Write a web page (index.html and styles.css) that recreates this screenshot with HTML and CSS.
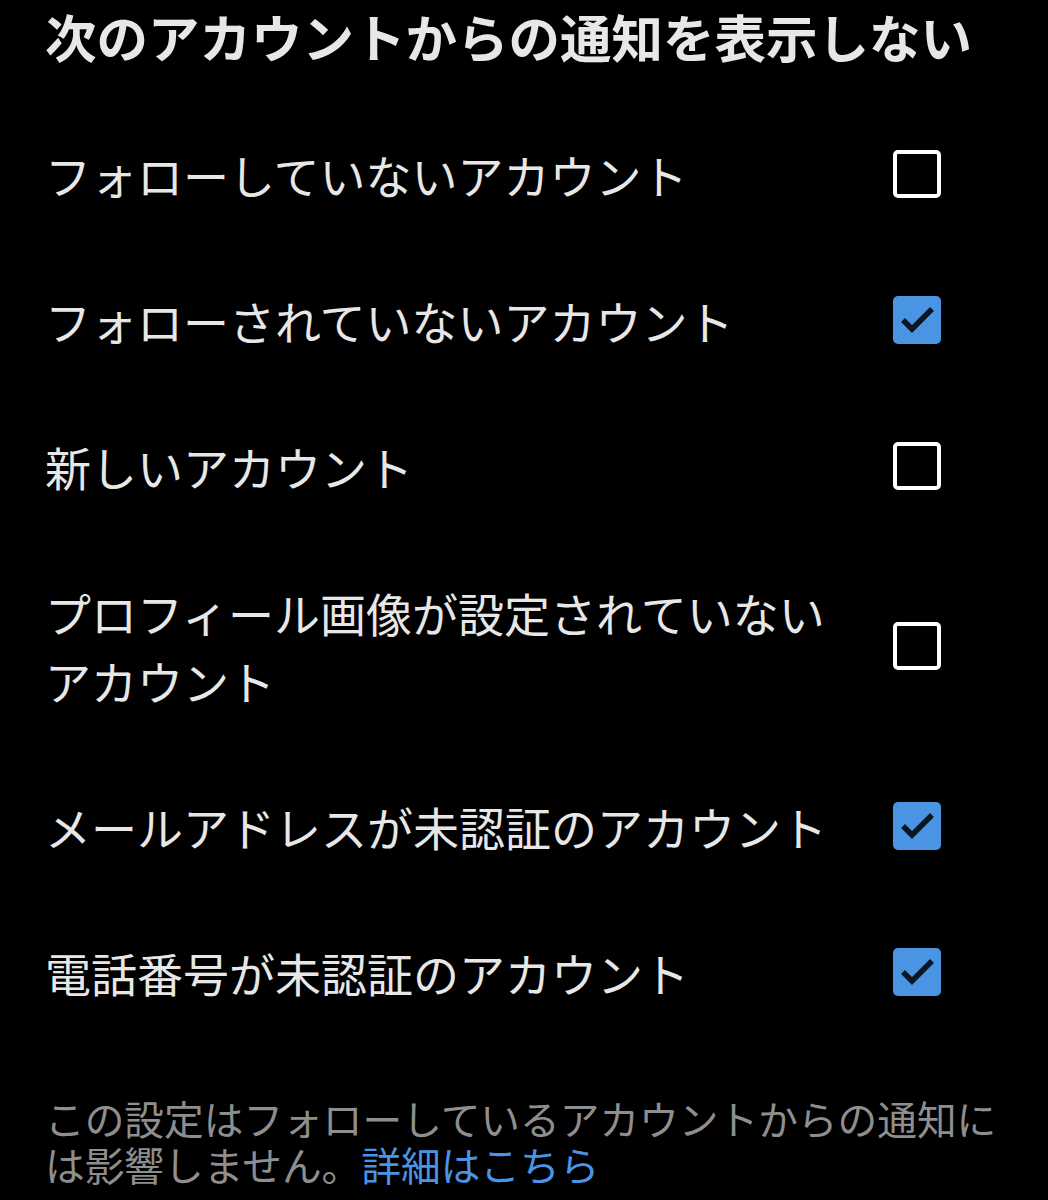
FILE: index.html
```html
<!DOCTYPE html>
<html lang="ja">
<head>
    <meta charset="UTF-8">
    <meta name="viewport" content="width=device-width, initial-scale=1.0">
    <title>通知のフィルター</title>
    <link rel="stylesheet" href="styles.css">
</head>
<body>
    <div class="settings">
        <h1 class="settings-title">次のアカウントからの通知を表示しない</h1>

        <label class="option">
            <span class="option-text">フォローしていないアカウント</span>
            <span class="checkbox"></span>
        </label>
        <label class="option">
            <span class="option-text">フォローされていないアカウント</span>
            <span class="checkbox checked">
                <svg viewBox="0 0 48 48"><path d="M10 24 L19 33 L39 13"/></svg>
            </span>
        </label>
        <label class="option">
            <span class="option-text">新しいアカウント</span>
            <span class="checkbox"></span>
        </label>
        <label class="option">
            <span class="option-text">プロフィール画像が設定されていないアカウント</span>
            <span class="checkbox"></span>
        </label>
        <label class="option">
            <span class="option-text">メールアドレスが未認証のアカウント</span>
            <span class="checkbox checked">
                <svg viewBox="0 0 48 48"><path d="M10 24 L19 33 L39 13"/></svg>
            </span>
        </label>
        <label class="option">
            <span class="option-text">電話番号が未認証のアカウント</span>
            <span class="checkbox checked">
                <svg viewBox="0 0 48 48"><path d="M10 24 L19 33 L39 13"/></svg>
            </span>
        </label>

        <p class="note">この設定はフォローしているアカウントからの通知には影響しません。<a href="#">詳細はこちら</a></p>
    </div>
</body>
</html>
```

FILE: styles.css
```css
body {
    margin: 0;
    background-color: #000;
    color: #e7e7e7;
    font-family: "Noto Sans CJK JP", "Noto Sans", sans-serif;
}
.settings {
    width: 1048px;
    padding: 6px 0 0;
}
.settings-title {
    margin: 0 0 35px;
    padding: 0 30px 0 45px;
    font-size: 51.5px;
    line-height: 60px;
    font-weight: bold;
    color: #e7e7e7;
}
.option {
    display: flex;
    align-items: center;
    padding: 39px 107px 39px 45px;
}
.option-text {
    flex: 1;
    font-size: 46px;
    line-height: 68px;
    margin-right: 56px;
}
.checkbox {
    width: 48px;
    height: 48px;
    box-sizing: border-box;
    border: 4px solid #fff;
    border-radius: 5px;
    flex-shrink: 0;
}
.checkbox.checked {
    border: none;
    background-color: #4a94e4;
}
.checkbox svg {
    display: block;
    width: 48px;
    height: 48px;
}
.checkbox svg path {
    fill: none;
    stroke: #0b1622;
    stroke-width: 5.5;
}
.note {
    margin: 50px 0 0;
    padding: 0 20px 0 45px;
    font-size: 39.7px;
    line-height: 46px;
    color: #8e8e8e;
}
.note a {
    color: #4a94e4;
    text-decoration: none;
}
```
